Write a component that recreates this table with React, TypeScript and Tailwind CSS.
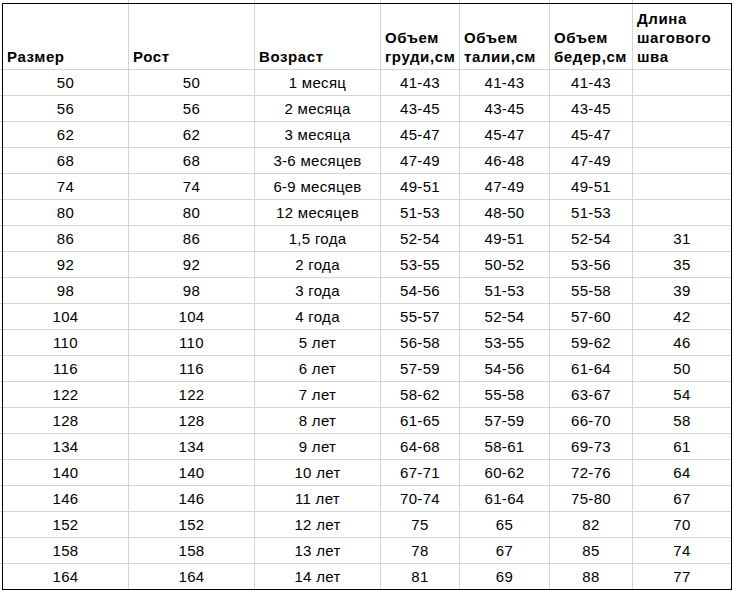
import React from "react";

const cols = [126, 126, 126, 79, 90, 83, 98];
const colClass = "grid grid-cols-[126px_126px_126px_79px_90px_83px_98px]";

const headers: string[][] = [
  ["Размер"],
  ["Рост"],
  ["Возраст"],
  ["Объем", "груди,см"],
  ["Объем", "талии,см"],
  ["Объем", "бедер,см"],
  ["Длина", "шагового", "шва"],
];

const rows: string[][] = [
  ["50", "50", "1 месяц", "41-43", "41-43", "41-43", ""],
  ["56", "56", "2 месяца", "43-45", "43-45", "43-45", ""],
  ["62", "62", "3 месяца", "45-47", "45-47", "45-47", ""],
  ["68", "68", "3-6 месяцев", "47-49", "46-48", "47-49", ""],
  ["74", "74", "6-9 месяцев", "49-51", "47-49", "49-51", ""],
  ["80", "80", "12 месяцев", "51-53", "48-50", "51-53", ""],
  ["86", "86", "1,5 года", "52-54", "49-51", "52-54", "31"],
  ["92", "92", "2 года", "53-55", "50-52", "53-56", "35"],
  ["98", "98", "3 года", "54-56", "51-53", "55-58", "39"],
  ["104", "104", "4 года", "55-57", "52-54", "57-60", "42"],
  ["110", "110", "5 лет", "56-58", "53-55", "59-62", "46"],
  ["116", "116", "6 лет", "57-59", "54-56", "61-64", "50"],
  ["122", "122", "7 лет", "58-62", "55-58", "63-67", "54"],
  ["128", "128", "8 лет", "61-65", "57-59", "66-70", "58"],
  ["134", "134", "9 лет", "64-68", "58-61", "69-73", "61"],
  ["140", "140", "10 лет", "67-71", "60-62", "72-76", "64"],
  ["146", "146", "11 лет", "70-74", "61-64", "75-80", "67"],
  ["152", "152", "12 лет", "75", "65", "82", "70"],
  ["158", "158", "13 лет", "78", "67", "85", "74"],
  ["164", "164", "14 лет", "81", "69", "88", "77"],
];

export default function App() {
  return (
    <div className="w-[734px] h-[591px] bg-white overflow-hidden font-['Liberation_Sans',Arial,sans-serif] text-black">
      {/* strip above the table showing sheet gridlines */}
      <div className="flex h-[3px] pl-[3px]">
        {cols.slice(0, 6).map((w, i) => (
          <div key={i} style={{ width: w }} className="h-full border-r border-[#d4d4d4]" />
        ))}
      </div>
      <div className="flex">
        {/* left gutter with row gridlines */}
        <div className="flex flex-col w-[2px] pt-[1px]">
          <div className="h-[66px] border-b border-[#d4d4d4]" />
          {rows.slice(0, 19).map((_, i) => (
            <div key={i} className="h-[26px] border-b border-[#d4d4d4]" />
          ))}
        </div>
        <div className={`${colClass} border border-black w-[730px]`}>
          {headers.map((lines, i) => (
            <div
              key={"h" + i}
              className={`h-[66px] flex flex-col justify-end pl-[4px] pb-[3px] border-b border-[#d4d4d4] ${
                i < 6 ? "border-r" : ""
              } text-[15px] leading-[19px] font-bold tracking-[0.6px] whitespace-nowrap`}
            >
              {lines.map((l, j) => (
                <div key={j}>{l}</div>
              ))}
            </div>
          ))}
          {rows.map((r, ri) =>
            r.map((c, ci) => (
              <div
                key={ri + "-" + ci}
                className={`${ri < rows.length - 1 ? "h-[26px] border-b" : "h-[25px]"} ${
                  ci < 6 ? "border-r" : ""
                } border-[#d4d4d4] flex items-center justify-center pt-[1px] text-[15px] tracking-[0.3px] whitespace-nowrap`}
              >
                {c}
              </div>
            ))
          )}
        </div>
      </div>
    </div>
  );
}
